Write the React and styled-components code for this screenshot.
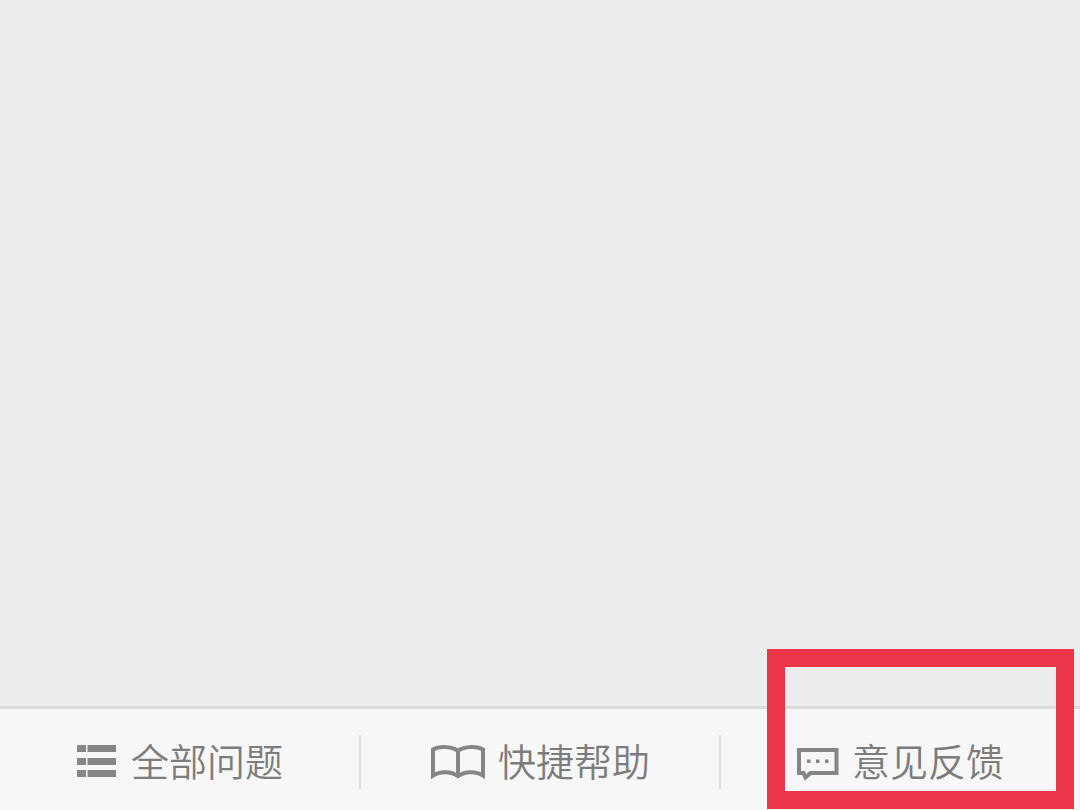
import React from 'react'
import styled, { createGlobalStyle } from 'styled-components'

const GlobalStyle = createGlobalStyle`
*{
box-sizing:border-box;
}
body{
margin:0;
background-color:#ededed;
font-family:"Noto Sans CJK SC", sans-serif;
}
`

const Page = styled.div`
display:flex;
flex-direction:column;
min-height:100vh;
overflow:hidden;
`

const Content = styled.main`
flex:1;
`

const TabBar = styled.nav`
display:grid;
grid-template-columns:1fr 1fr 1fr;
background-color:#f7f7f7;
border-top:3px solid #dcdcdc;
`

const Tab = styled.div`
position:relative;
display:flex;
align-items:center;
height:101px;
padding-top:4px;
& + &::before{
content:"";
width:2px;
height:54px;
margin-left:-1px;
margin-right:-1px;
background-color:#dedede;
}
`

const TabLink = styled.a`
flex:1;
display:flex;
align-items:center;
justify-content:center;
gap:14px;
color:#7c7c7c;
font-size:38px;
font-weight:350;
line-height:56px;
text-decoration:none;
white-space:nowrap;
svg{
flex:none;
overflow:visible;
}
`

const TabName = styled.span`
padding-bottom:4px;
`

const Highlight = styled.div`
position:absolute;
top:-60px;
right:6px;
bottom:1px;
left:47px;
border:18px solid #ea3648;
pointer-events:none;
`

const ListIcon = () => (
    <svg width="40" height="34" viewBox="0 0 40 34" fill="#868686" aria-hidden="true">
        <path d="M0 0h9v7H0zM10.5 0H39v7H10.5zM0 13h9v7H0zM10.5 13H39v7H10.5zM0 25h9v7H0zM10.5 25H39v7H10.5z" />
    </svg>
)

const BookIcon = () => (
    <svg width="54" height="34" viewBox="-1 0 54 34" fill="none" stroke="#868686" strokeWidth="4" aria-hidden="true">
        <path d="M2 30.5V4.5C8 1 20 1 27 6C34 1 46 1 52 4.5V30.5C45 26 34 26 27 31C20 26 9 26 2 30.5Z" />
        <path d="M27 6V31" />
    </svg>
)

const MessageIcon = () => (
    <svg width="42" height="38" viewBox="0 -2 42 38" fill="none" aria-hidden="true">
        <path stroke="#868686" strokeWidth="4" d="M3 5H40.5V28H14.5L9.5 32.5L7.5 28H3Z" />
        <path fill="#868686" d="M11 14.5h3.5V18H11zM20 14.5h3.5V18H20zM29 14.5h3.5V18H29z" />
    </svg>
)

const tabs = [
    { id: 'all', name: '全部问题', icon: <ListIcon /> },
    { id: 'help', name: '快捷帮助', icon: <BookIcon /> },
    { id: 'feedback', name: '意见反馈', icon: <MessageIcon />, highlighted: true },
]

const App = () => {
    return (
        <Page>
            <GlobalStyle />
            <Content />
            <TabBar>
                {tabs.map((tab) => (
                    <Tab key={tab.id}>
                        <TabLink href={`#${tab.id}`}>
                            {tab.icon}
                            <TabName>{tab.name}</TabName>
                        </TabLink>
                        {tab.highlighted && <Highlight />}
                    </Tab>
                ))}
            </TabBar>
        </Page>
    )
}

export default App
